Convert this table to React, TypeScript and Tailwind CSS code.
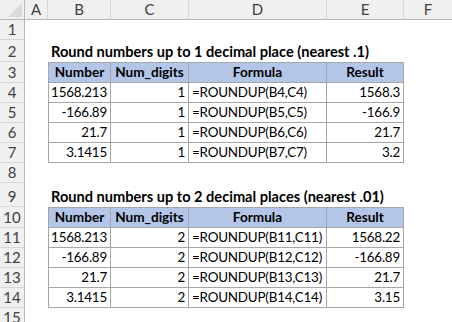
import React from "react";

type TRow = { b: string; c: string; d: string; e: string; head?: boolean; first?: boolean };

const rowHeights: Record<number, string> = {
  1: "h-[20px]",
  2: "h-[22px]",
  3: "h-[21px]",
  4: "h-[20px]",
  5: "h-[20px]",
  6: "h-[20px]",
  7: "h-[20px]",
  8: "h-[20px]",
  9: "h-[24px]",
  10: "h-[21px]",
  11: "h-[20px]",
  12: "h-[20px]",
  13: "h-[20px]",
  14: "h-[20px]",
  15: "h-[20px]",
};

function TableRow({ r }: { r: TRow }) {
  const base = `h-full flex items-center border-r border-b border-[#a6a6a6] px-[3px] whitespace-nowrap ${r.first ? "border-t" : ""} ${r.head ? "bg-[#b4c6e7] font-bold text-[13.6px]" : "text-[13.4px] tracking-[-0.2px]"}`;
  return (
    <>
      <div className={`${base} w-[63px] border-l ${r.head ? "justify-center" : "justify-end"}`}>{r.b}</div>
      <div className={`${base} w-[78px] ${r.head ? "justify-center" : "justify-end"}`}>{r.c}</div>
      <div className={`${base} w-[138px] ${r.head ? "justify-center" : "justify-start"}`}>{r.d}</div>
      <div className={`${base} w-[77px] ${r.head ? "justify-center" : "justify-end"}`}>{r.e}</div>
    </>
  );
}

const colHead = "flex items-center justify-center border-b border-r border-b-[#b8b8b8] border-r-[#d6d6d6] text-[15px] text-[#404040]";

export default function App() {
  const t1: TRow[] = [
    { b: "Number", c: "Num_digits", d: "Formula", e: "Result", head: true, first: true },
    { b: "1568.213", c: "1", d: "=ROUNDUP(B4,C4)", e: "1568.3" },
    { b: "-166.89", c: "1", d: "=ROUNDUP(B5,C5)", e: "-166.9" },
    { b: "21.7", c: "1", d: "=ROUNDUP(B6,C6)", e: "21.7" },
    { b: "3.1415", c: "1", d: "=ROUNDUP(B7,C7)", e: "3.2" },
  ];
  const t2: TRow[] = [
    { b: "Number", c: "Num_digits", d: "Formula", e: "Result", head: true, first: true },
    { b: "1568.213", c: "2", d: "=ROUNDUP(B11,C11)", e: "1568.22" },
    { b: "-166.89", c: "2", d: "=ROUNDUP(B12,C12)", e: "-166.89" },
    { b: "21.7", c: "2", d: "=ROUNDUP(B13,C13)", e: "21.7" },
    { b: "3.1415", c: "2", d: "=ROUNDUP(B14,C14)", e: "3.15" },
  ];

  const rows: React.ReactNode[] = [];
  for (let i = 1; i <= 15; i++) {
    let content: React.ReactNode = null;
    if (i === 2 || i === 9) {
      content = (
        <div className="h-full flex items-end pb-[2px] pl-[3px] font-bold leading-none whitespace-nowrap">
          {i === 2 ? "Round numbers up to 1 decimal place (nearest .1)" : "Round numbers up to 2 decimal places (nearest .01)"}
        </div>
      );
    } else if (i >= 3 && i <= 7) {
      content = <TableRow r={t1[i - 3]} />;
    } else if (i >= 10 && i <= 14) {
      content = <TableRow r={t2[i - 10]} />;
    }
    rows.push(
      <div key={i} className={`flex ${rowHeights[i]}`}>
        <div className="w-[25px] shrink-0 flex items-end justify-center pb-[2px] leading-none bg-[#f0f0f0] border-r border-[#b8b8b8] border-b border-b-[#d6d6d6] text-[15px] text-[#404040]">
          {i}
        </div>
        <div className="w-[23px] shrink-0" />
        <div className="flex h-full">{content}</div>
      </div>
    );
  }

  return (
    <div className="w-[452px] h-[322px] overflow-hidden bg-white text-[14.6px] text-black font-['Lato','Open_Sans',sans-serif]">
      <div className="flex h-[20px] bg-[#f0f0f0]">
        <div className="relative w-[25px] border-r border-b border-[#b8b8b8]">
          <svg className="absolute right-[2px] bottom-[2px]" width="14" height="14" viewBox="0 0 14 14">
            <polygon points="14,0 14,14 0,14" fill="#dadada" />
          </svg>
        </div>
        <div className={`${colHead} w-[23px]`}>A</div>
        <div className={`${colHead} w-[63px]`}>B</div>
        <div className={`${colHead} w-[78px]`}>C</div>
        <div className={`${colHead} w-[138px]`}>D</div>
        <div className={`${colHead} w-[77px]`}>E</div>
        <div className="flex-1 flex items-center border-b border-[#b8b8b8] text-[15px] text-[#404040]">
          <span className="w-[48px] text-center">F</span>
        </div>
      </div>
      {rows}
    </div>
  );
}
